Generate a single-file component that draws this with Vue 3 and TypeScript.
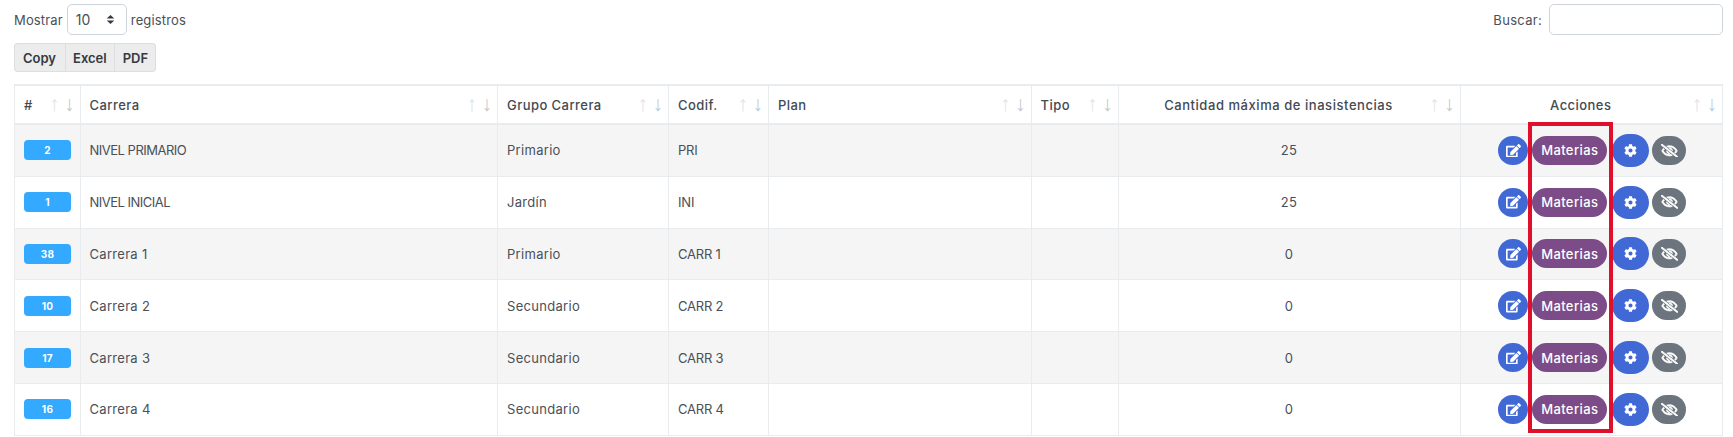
<template>
  <div class="page">
    <div class="top-row">
      <label class="length">
        Mostrar
        <span class="select-box">
          <select class="select-input">
            <option v-for="n in lengths" :key="n">{{ n }}</option>
          </select>
          <svg class="select-arrows" viewBox="0 0 16 16" aria-hidden="true">
            <path d="M8 1.5 13.5 6.5H2.5Z" />
            <path d="M8 14.5 13.5 9.5H2.5Z" />
          </svg>
        </span>
        registros
      </label>
      <label class="search">
        Buscar:
        <input class="search-input" type="text" />
      </label>
    </div>

    <div class="export-group">
      <button v-for="b in exportButtons" :key="b" class="export-btn" type="button">{{ b }}</button>
    </div>

    <table class="grid">
      <colgroup>
        <col v-for="c in columns" :key="c.label" :style="{ width: c.width + 'px' }" />
      </colgroup>
      <thead>
        <tr>
          <th v-for="c in columns" :key="c.label" :class="{ center: c.center, wide: c.wide }">
            {{ c.label }}
            <span class="sort sort-up">↑</span>
            <span class="sort sort-down">↓</span>
          </th>
        </tr>
      </thead>
      <tbody>
        <tr v-for="row in rows" :key="row.id">
          <td><span class="id-badge">{{ row.id }}</span></td>
          <td :class="{ caps: isCaps(row.carrera) }">{{ row.carrera }}</td>
          <td>{{ row.grupo }}</td>
          <td class="code">{{ row.codif }}</td>
          <td></td>
          <td></td>
          <td class="center">{{ row.max }}</td>
          <td class="actions">
            <div class="action-row">
              <button class="btn btn-edit" type="button" aria-label="Editar">
                <svg width="15" height="13.5" viewBox="0 0 576 512"><path fill="currentColor" :d="editIcon" /></svg>
              </button>
              <button class="btn btn-materias" type="button">Materias</button>
              <button class="btn btn-config" type="button" aria-label="Configurar">
                <svg width="13" height="13" viewBox="0 0 512 512"><path fill="currentColor" :d="cogIcon" /></svg>
              </button>
              <button class="btn btn-hide" type="button" aria-label="Ocultar">
                <svg width="17" height="13.6" viewBox="0 0 640 512">
                  <path fill="currentColor" stroke="currentColor" stroke-width="30" :d="eyeSlashIcon" />
                </svg>
              </button>
            </div>
          </td>
        </tr>
      </tbody>
    </table>

    <!-- annotation drawn over the Materias column -->
    <div class="highlight"></div>
  </div>
</template>

<script setup lang="ts">
const lengths = [10, 25, 50, 100];
const exportButtons = ['Copy', 'Excel', 'PDF'];

const columns = [
  { label: '#', width: 65.5, center: false, wide: false },
  { label: 'Carrera', width: 417.5, center: false, wide: false },
  { label: 'Grupo Carrera', width: 171, center: false, wide: false },
  { label: 'Codif.', width: 100, center: false, wide: false },
  { label: 'Plan', width: 262.5, center: false, wide: false },
  { label: 'Tipo', width: 87, center: false, wide: false },
  { label: 'Cantidad máxima de inasistencias', width: 342, center: true, wide: true },
  { label: 'Acciones', width: 262.5, center: true, wide: false },
];

const rows = [
  { id: 2, carrera: 'NIVEL PRIMARIO', grupo: 'Primario', codif: 'PRI', max: 25 },
  { id: 1, carrera: 'NIVEL INICIAL', grupo: 'Jardín', codif: 'INI', max: 25 },
  { id: 38, carrera: 'Carrera 1', grupo: 'Primario', codif: 'CARR 1', max: 0 },
  { id: 10, carrera: 'Carrera 2', grupo: 'Secundario', codif: 'CARR 2', max: 0 },
  { id: 17, carrera: 'Carrera 3', grupo: 'Secundario', codif: 'CARR 3', max: 0 },
  { id: 16, carrera: 'Carrera 4', grupo: 'Secundario', codif: 'CARR 4', max: 0 },
];

function isCaps(text: string): boolean {
  return text === text.toUpperCase();
}

const editIcon =
  'M402.6 83.2l90.2 90.2c3.8 3.8 3.8 10 0 13.8L274.4 405.6l-92.8 10.3c-12.4 1.4-22.9-9.1-21.5-21.5l10.3-92.8L388.8 83.2c3.8-3.8 10-3.8 13.8 0zm162-22.9l-48.8-48.8c-15.2-15.2-39.9-15.2-55.2 0l-35.4 35.4c-3.8 3.8-3.8 10 0 13.8l90.2 90.2c3.8 3.8 10 3.8 13.8 0l35.4-35.4c15.2-15.3 15.2-40 0-55.2zM384 346.2V448H64V128h229.8c3.2 0 6.2-1.3 8.5-3.5l40-40c7.6-7.6 2.2-20.5-8.5-20.5H48C21.5 64 0 85.5 0 112v352c0 26.5 21.5 48 48 48h352c26.5 0 48-21.5 48-48V306.2c0-10.7-12.9-16-20.5-8.5l-40 40c-2.2 2.3-3.5 5.3-3.5 8.5z';
const cogIcon =
  'M487.4 315.7l-42.6-24.6c4.3-23.2 4.3-47 0-70.2l42.6-24.6c4.9-2.8 7.1-8.6 5.5-14-11.1-35.6-30-67.8-54.7-94.6-3.8-4.1-10-5.1-14.8-2.3L380.8 110c-17.9-15.4-38.5-27.3-60.8-35.1V25.8c0-5.6-3.9-10.5-9.4-11.7-36.7-8.2-74.3-7.8-109.2 0-5.5 1.2-9.4 6.1-9.4 11.7V75c-22.2 7.9-42.8 19.8-60.8 35.1L88.7 85.5c-4.9-2.8-11-1.9-14.8 2.3-24.7 26.7-43.6 58.9-54.7 94.6-1.7 5.4.6 11.2 5.5 14L67.3 221c-4.3 23.2-4.3 47 0 70.2l-42.6 24.6c-4.9 2.8-7.1 8.6-5.5 14 11.1 35.6 30 67.8 54.7 94.6 3.8 4.1 10 5.1 14.8 2.3l42.6-24.6c17.9 15.4 38.5 27.3 60.8 35.1v49.2c0 5.6 3.9 10.5 9.4 11.7 36.7 8.2 74.3 7.8 109.2 0 5.5-1.2 9.4-6.1 9.4-11.7v-49.2c22.2-7.9 42.8-19.8 60.8-35.1l42.6 24.6c4.9 2.8 11 1.9 14.8-2.3 24.7-26.7 43.6-58.9 54.7-94.6 1.5-5.5-.7-11.3-5.6-14.1zM256 336c-44.1 0-80-35.9-80-80s35.9-80 80-80 80 35.9 80 80-35.9 80-80 80z';
const eyeSlashIcon =
  'M634 471L36 3.51A16 16 0 0 0 13.51 6l-10 12.49A16 16 0 0 0 6 41l598 467.49a16 16 0 0 0 22.49-2.49l10-12.49A16 16 0 0 0 634 471zM296.79 146.47l134.79 105.38C429.36 191.91 380.48 144 320 144a112.26 112.26 0 0 0-23.21 2.47zm46.42 219.07L208.42 260.16C210.65 320.09 259.53 368 320 368a113 113 0 0 0 23.21-2.46zM320 112c98.65 0 189.09 55 237.93 144a285.53 285.53 0 0 1-44 60.2l37.74 29.5a333.7 333.7 0 0 0 52.9-75.11 32.35 32.35 0 0 0 0-29.19C550.29 135.59 442.93 64 320 64c-36.7 0-71.71 7-104.63 18.81l46.41 36.29c18.94-4.3 38.34-7.1 58.22-7.1zm0 288c-98.65 0-189.08-55-237.93-144a285.47 285.47 0 0 1 44.05-60.19l-37.74-29.5a333.6 333.6 0 0 0-52.89 75.1 32.35 32.35 0 0 0 0 29.19C89.72 376.41 197.08 448 320 448c36.7 0 71.71-7.05 104.63-18.81l-46.41-36.28C359.28 397.2 339.89 400 320 400z';
</script>

<style>
html,
body {
  background: #fff;
  overflow: hidden;
}
</style>

<style scoped>
.page {
  position: relative;
  width: 1733px;
  height: 437px;
  box-sizing: border-box;
  padding: 4px 10px 0 14px;
  overflow: hidden;
  background: #fff;
  color: #495057;
  font-family: Inter, "Open Sans", sans-serif;
  font-size: 13px;
  letter-spacing: 0.3px;
}

.top-row {
  display: flex;
  justify-content: space-between;
  align-items: center;
  height: 31px;
}

.length,
.search {
  display: flex;
  align-items: center;
}

.length {
  letter-spacing: 0.15px;
}

.select-box {
  position: relative;
  display: block;
  width: 60px;
  height: 31px;
  margin: 0 4px;
}

.select-input {
  width: 100%;
  height: 100%;
  box-sizing: border-box;
  padding: 0 8px;
  appearance: none;
  background: #fff;
  border: 1px solid #ced4da;
  border-radius: 5px;
  color: #495057;
  font: inherit;
  font-size: 14px;
}

.select-arrows {
  position: absolute;
  top: 10px;
  right: 11px;
  width: 11px;
  height: 11px;
  fill: #343a40;
  pointer-events: none;
}

.search-input {
  width: 174px;
  height: 31px;
  box-sizing: border-box;
  margin-left: 7px;
  background: #fff;
  border: 1px solid #ced4da;
  border-radius: 5px;
}

.export-group {
  display: flex;
  width: fit-content;
  height: 29px;
  margin-top: 8px;
  border-radius: 4px;
  overflow: hidden;
  box-shadow: inset 0 0 0 1px #dcdfe2;
  background: #ececec;
}

.export-btn {
  padding: 0 8px;
  background: none;
  border: 0;
  border-left: 1px solid #dcdfe2;
  color: #343a40;
  font: inherit;
  font-weight: 600;
  letter-spacing: 0;
}

.export-btn:first-child {
  padding: 0 9px;
  border-left: 0;
}

.export-btn:nth-child(2) {
  padding: 0 7px;
}

.grid {
  width: 1709px;
  margin-top: 12px;
  table-layout: fixed;
  border-collapse: separate;
  border-spacing: 0;
  border-top: 2px solid #e9ecef;
  border-left: 1px solid #e9ecef;
}

th,
td {
  box-sizing: border-box;
  border-right: 1px solid #e9ecef;
  border-bottom: 1px solid #e9ecef;
  text-align: left;
}

th {
  position: relative;
  height: 39px;
  padding: 0 30px 0 9px;
  border-bottom-width: 2px;
  color: #434a52;
  font-weight: 500;
  letter-spacing: 0.45px;
}

th.wide {
  letter-spacing: 0.55px;
}

td {
  height: 51.8px;
  padding: 0 9px;
}

td.caps {
  letter-spacing: -0.5px;
}

td.code {
  letter-spacing: -0.2px;
}

td.actions {
  padding: 0 8px 0 10px;
}

tbody tr:nth-child(odd) td {
  background: #f5f5f5;
}

th.center,
td.center {
  text-align: center;
}

.sort {
  position: absolute;
  top: 8px;
  color: #c3c9d0;
  font-family: "Liberation Sans", sans-serif;
  font-size: 21px;
  font-weight: 400;
  line-height: 20px;
  letter-spacing: 0;
}

.sort-up {
  right: 20px;
  color: #dfe3e6;
}

.sort-down {
  right: 5px;
}

.id-badge {
  display: block;
  width: 47px;
  height: 20px;
  background: #33a9ff;
  border-radius: 4px;
  color: #fff;
  font-size: 10px;
  font-weight: 700;
  line-height: 20px;
  text-align: center;
}

.action-row {
  display: flex;
  justify-content: center;
  align-items: center;
}

.btn {
  display: flex;
  justify-content: center;
  align-items: center;
  height: 29px;
  padding: 0;
  border: 0;
  color: #fff;
  font: inherit;
  font-weight: 500;
  letter-spacing: 0.4px;
}

.btn-edit {
  width: 30px;
  background: #4169d6;
  border-radius: 15px;
}

.btn-materias {
  width: 75px;
  margin-left: 4px;
  background: #7b4c87;
  border-radius: 15px;
}

.btn-config {
  width: 37px;
  height: 33px;
  margin-left: 5px;
  background: #4169d6;
  border-radius: 17px;
}

.btn-hide {
  width: 34px;
  margin-left: 3px;
  background: #6c757d;
  border-radius: 15px;
}

.highlight {
  position: absolute;
  left: 1528px;
  top: 122px;
  width: 85px;
  height: 311px;
  box-sizing: border-box;
  border: 4px solid #e0102d;
  pointer-events: none;
}
</style>
